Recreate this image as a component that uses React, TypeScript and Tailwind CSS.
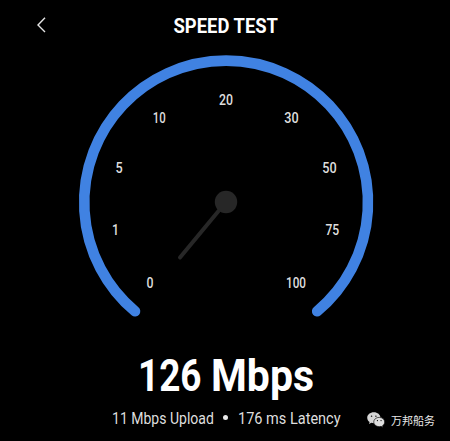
const marks = [
  { label: "0", x: 150, y: 282.3, width: 7 },
  { label: "1", x: 115.5, y: 229.5, width: 7 },
  { label: "5", x: 119.2, y: 167.5, width: 7.2 },
  { label: "10", x: 159.3, y: 117.8, width: 13 },
  { label: "20", x: 226, y: 99.6, width: 14 },
  { label: "30", x: 291.5, y: 117.8, width: 14.4 },
  { label: "50", x: 329.5, y: 167.5, width: 14.4 },
  { label: "75", x: 332.3, y: 229.5, width: 13.8 },
  { label: "100", x: 296, y: 282.3, width: 20 },
]

function Gauge() {
  return (
    <svg viewBox="0 50 450 275" className="block h-[275px] w-[450px] shrink-0">
      <path
        d="M135 311.300A141.900 141.900 0 1 1 317.200 311.300"
        fill="none"
        stroke="#4082e2"
        strokeWidth="10.6"
        strokeLinecap="round"
      />
      {marks.map((mark) => (
        <text
          key={mark.label}
          x={mark.x}
          y={mark.y + 5.2}
          textAnchor="middle"
          textLength={mark.width}
          lengthAdjust="spacingAndGlyphs"
          className="fill-[#dedede] text-[15px] font-medium"
        >
          {mark.label}
        </text>
      ))}
      <line x1="226" y1="202" x2="180" y2="257.5" stroke="#272727" strokeWidth="4" strokeLinecap="round" />
      <circle cx="226" cy="202" r="11.2" fill="#272727" />
    </svg>
  )
}

function WeChatIcon() {
  return (
    <svg viewBox="0.4 0.5 17.4 15.5" className="h-4 w-[18px]">
      <path
        d="M7 .8C3.400.8.6 3.100.6 6.100c0 1.700.9 3.100 2.300 4.100l-.6 2 2.300-1.200c.8.2 1.600.3 2.400.3 3.600 0 6.400-2.300 6.400-5.200S10.600.8 7 .8Z"
        fill="#d6d6d6"
      />
      <path
        d="M12.200 5.700c-3 0-5.300 2-5.300 4.500s2.300 4.500 5.300 4.500c.6 0 1.200-.1 1.800-.3l1.900 1.100-.5-1.700c1.300-.8 2.100-2.100 2.100-3.600 0-2.500-2.400-4.500-5.300-4.500Z"
        fill="#dedede"
        stroke="#000"
        strokeWidth=".6"
      />
      <circle cx="4.800" cy="4.500" r=".7" />
      <circle cx="9" cy="4.500" r=".7" />
      <circle cx="10.500" cy="8.800" r=".6" />
      <circle cx="14" cy="8.800" r=".6" />
    </svg>
  )
}

export default function App() {
  return (
    <main className="relative flex h-[441px] w-[450px] flex-col overflow-hidden bg-black font-['Roboto',sans-serif] text-white">
      <header className="grid h-[50px] shrink-0 grid-cols-[74px_1fr_72px] items-center">
        <button className="pl-[36px]" aria-label="Back">
          <svg viewBox="0 0 10 18" className="block h-[18px] w-[10px]">
            <path d="M9 1.800 2 9l7 7" fill="none" stroke="#e4e4e4" strokeWidth="1.400" />
          </svg>
        </button>
        <h1 className="flex justify-center pt-px text-[20px] leading-none font-bold whitespace-nowrap">
          <span className="block scale-x-[0.92]">SPEED TEST</span>
        </h1>
      </header>

      <Gauge />

      <section className="flex flex-col items-center pl-[2px]">
        <p className="mt-[24px] grid grid-cols-[73px_103px] text-[45px] leading-[54px] font-bold whitespace-nowrap">
          <span className="w-max origin-left scale-x-[0.82]">126</span>
          <span className="w-max origin-left scale-x-[0.91]">Mbps</span>
        </p>
        <div className="mt-[6px] grid grid-cols-[102px_24px_103px] items-center text-[16.500px] leading-5 whitespace-nowrap text-[#dedede]">
          <span className="w-max origin-left scale-x-[0.85]">11 Mbps Upload</span>
          <span className="mb-[3px] size-[5px] justify-self-center rounded-full bg-[#e8e8e8]" />
          <span className="w-max origin-left scale-x-[0.88]">176 ms Latency</span>
        </div>
      </section>

      <div className="absolute top-[412px] left-[367px] flex items-center gap-[6px] font-['Noto_Sans_CJK_SC',sans-serif] text-[11px] leading-4 text-[#e8e8e8]">
        <WeChatIcon />
        <span className="-mt-px whitespace-nowrap">万邦船务</span>
      </div>
    </main>
  )
}
